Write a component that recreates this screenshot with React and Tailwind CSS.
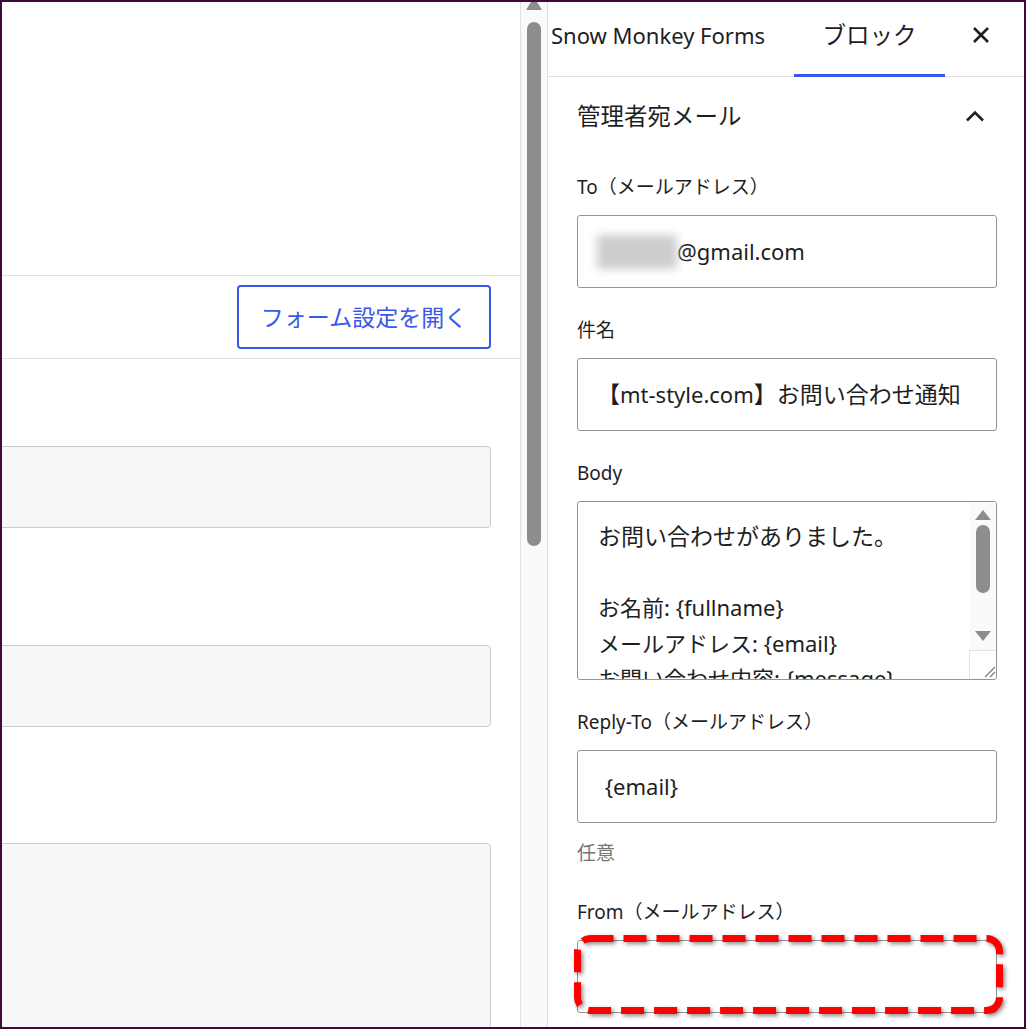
export default function App() {
  const font = "font-['Noto_Sans','Noto_Sans_CJK_JP',sans-serif]";
  return (
    <div className={`w-[1026px] h-[1029px] border-2 border-[#3d0a3d] bg-white flex overflow-hidden text-[#1e1e1e] ${font}`}>
      {/* Editor canvas */}
      <div className="w-[519px] shrink-0 border-r border-[#e0e0e0] flex flex-col overflow-hidden">
        <div className="h-[273px] shrink-0" />
        <div className="h-[84px] shrink-0 border-y border-[#e0e0e0] flex items-center justify-end pr-[29px]">
          <button className="h-[64px] w-[254px] border-2 border-[#3858e9] rounded-[4px] text-[#3858e9] text-[23px] leading-[30px] flex items-center justify-center">
            フォーム設定を開く
          </button>
        </div>
        <div className="h-[87px] shrink-0" />
        <div className="h-[82px] shrink-0 -ml-[10px] mr-[29px] bg-[#f7f7f7] border border-[#cccccc] rounded-[4px]" />
        <div className="h-[117px] shrink-0" />
        <div className="h-[82px] shrink-0 -ml-[10px] mr-[29px] bg-[#f7f7f7] border border-[#cccccc] rounded-[4px]" />
        <div className="h-[116px] shrink-0" />
        <div className="h-[300px] shrink-0 -ml-[10px] mr-[29px] bg-[#f7f7f7] border border-[#cccccc] rounded-[4px]" />
      </div>

      {/* Editor scrollbar */}
      <div className="w-[27px] shrink-0 border-r border-[#e0e0e0] bg-[#fafafa] flex flex-col items-center">
        <svg width="16" height="8" viewBox="0 0 16 8" className="shrink-0">
          <polygon points="8,-5 16,8 0,8" fill="#8d8d8d" />
        </svg>
        <div className="mt-[12px] w-[14px] h-[524px] rounded-full bg-[#8d8d8d]" />
      </div>

      {/* Sidebar panel */}
      <div className="w-[476px] shrink-0 flex flex-col">
        {/* Header tabs */}
        <div className="h-[75px] shrink-0 border-b border-[#e0e0e0] flex">
          <div className="w-[246px] pl-[3px] pt-[16px] text-[22px] leading-[34px] whitespace-nowrap">
            Snow Monkey Forms
          </div>
          <div className="w-[151px] relative flex justify-center pt-[16px] text-[23.5px] leading-[34px]">
            ブロック
            <div className="absolute left-0 right-0 -bottom-px h-[3px] bg-[#3858e9]" />
          </div>
          <div className="w-[72px] flex justify-center pt-[24px]">
            <svg width="18" height="18" viewBox="0 0 18 18">
              <path d="M2 2 L16 16 M16 2 L2 16" stroke="#1e1e1e" strokeWidth="2.6" strokeLinecap="butt" />
            </svg>
          </div>
        </div>

        {/* Body */}
        <div className="pl-[29px] pr-[27px] flex flex-col">
          <div className="pt-[23px] flex items-center justify-between">
            <div className="text-[23.5px] leading-[32px]">管理者宛メール</div>
            <svg width="20" height="12" viewBox="0 0 20 12" className="mr-[12px]">
              <path d="M2 10.5 L10 2.5 L18 10.5" fill="none" stroke="#1e1e1e" strokeWidth="2.6" />
            </svg>
          </div>

          {/* To */}
          <div className="mt-[43px] text-[19px] leading-[24px]">To（メールアドレス）</div>
          <div className="mt-[16px] h-[73px] border border-[#949494] rounded-[3px] flex items-center pl-[19px] text-[22px] whitespace-nowrap">
            <span className="inline-block w-[80px] h-[34px] bg-[#cdcdcd] blur-[5px]" />
            <span>@gmail.com</span>
          </div>

          {/* Subject */}
          <div className="mt-[30px] text-[19px] leading-[24px]">件名</div>
          <div className="mt-[16px] h-[73px] border border-[#949494] rounded-[3px] flex items-center pl-[19px] text-[22px] whitespace-nowrap overflow-hidden">
            <span className="text-[23px]">【</span>
            <span>mt-style.com</span>
            <span className="text-[23px]">】お問い合わせ通知</span>
          </div>

          {/* Body */}
          <div className="mt-[30px] text-[19px] leading-[24px]">Body</div>
          <div className="mt-[16px] h-[179px] border border-[#949494] rounded-[3px] flex overflow-hidden">
            <div className="flex-1 pl-[20px] pt-[17px] text-[22px] leading-[35.5px] whitespace-nowrap overflow-hidden">
              <div className="text-[23px]">お問い合わせがありました。</div>
              <div>&nbsp;</div>
              <div>お名前: {"{fullname}"}</div>
              <div>メールアドレス: {"{email}"}</div>
              <div>お問い合わせ内容: {"{message}"}</div>
            </div>
            <div className="w-[27px] shrink-0 bg-[#fafafa] flex flex-col items-center">
              <svg width="16" height="10" viewBox="0 0 16 10" className="mt-[8px] shrink-0">
                <polygon points="8,0 16,10 0,10" fill="#8d8d8d" />
              </svg>
              <div className="mt-[5px] w-[14px] h-[68px] rounded-full bg-[#8d8d8d] shrink-0" />
              <svg width="16" height="10" viewBox="0 0 16 10" className="mt-[38px] shrink-0">
                <polygon points="0,0 16,0 8,10" fill="#8d8d8d" />
              </svg>
              <div className="mt-[9px] w-[27px] h-[28px] shrink-0 bg-white border-t border-l border-[#e2e2e2] flex items-end justify-end">
                <svg width="14" height="14" viewBox="0 0 14 14">
                  <path d="M3 13 L13 3 M8 13 L13 8" stroke="#7a7a7a" strokeWidth="1.2" />
                </svg>
              </div>
            </div>
          </div>

          {/* Reply-To */}
          <div className="mt-[30px] text-[19px] leading-[24px]">Reply-To（メールアドレス）</div>
          <div className="mt-[16px] h-[73px] border border-[#949494] rounded-[3px] flex items-center pl-[21px] text-[22px] whitespace-pre">
            {" {email}"}
          </div>
          <div className="mt-[18px] text-[19px] leading-[24px] text-[#757575]">任意</div>

          {/* From */}
          <div className="mt-[35px] text-[19px] leading-[24px]">From（メールアドレス）</div>
          <div className="relative mt-[16px] h-[73px] border border-[#949494] rounded-[3px]">
            <svg
              width="429"
              height="79"
              viewBox="0 0 429 79"
              className="absolute left-[-4px] top-[-6px] drop-shadow-[2px_2px_2px_rgba(0,0,0,0.45)]"
            >
              <rect x="3.5" y="3.5" width="422" height="72" rx="13" fill="none" stroke="#ff0000" strokeWidth="7" strokeDasharray="23 10" />
            </svg>
          </div>
        </div>
      </div>
    </div>
  );
}
